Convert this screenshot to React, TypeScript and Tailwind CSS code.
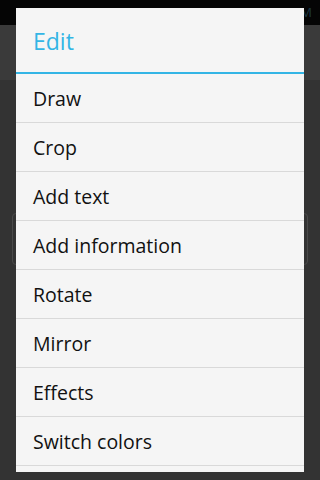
export default function App() {
  const items = ["Draw", "Crop", "Add text", "Add information", "Rotate", "Mirror", "Effects", "Switch colors"];
  return (
    <div className="relative w-[320px] h-[480px] overflow-hidden bg-[#333333] font-['Open_Sans',sans-serif]">
      {/* background app */}
      <div className="h-[25px] bg-[#050505] flex items-center justify-end px-2 gap-2 text-[#1e3a44] text-[13px]">
        <span>6:00 PM</span>
      </div>
      <div className="h-[55px] bg-[#3a3a3a]"></div>
      <div className="px-3 pt-[133px]">
        <div className="h-[52px] rounded border border-[#4a4a4a]"></div>
      </div>

      {/* dialog */}
      <div className="absolute left-[16px] top-[8px] w-[288px] h-[464px] bg-[#f5f5f5] overflow-hidden">
        <div className="h-[64px] flex items-center pl-[17px] pt-[2px] text-[#33b5e5] text-[23px]">Edit</div>
        <div className="h-[2px] bg-[#33b5e5]"></div>
        {items.map((it) => (
          <div key={it} className="h-[49px] border-b border-[#d9d9d9] flex items-center pl-[17px] pt-[2px] text-[#111111] text-[19.5px]">
            {it}
          </div>
        ))}
      </div>
    </div>
  );
}
